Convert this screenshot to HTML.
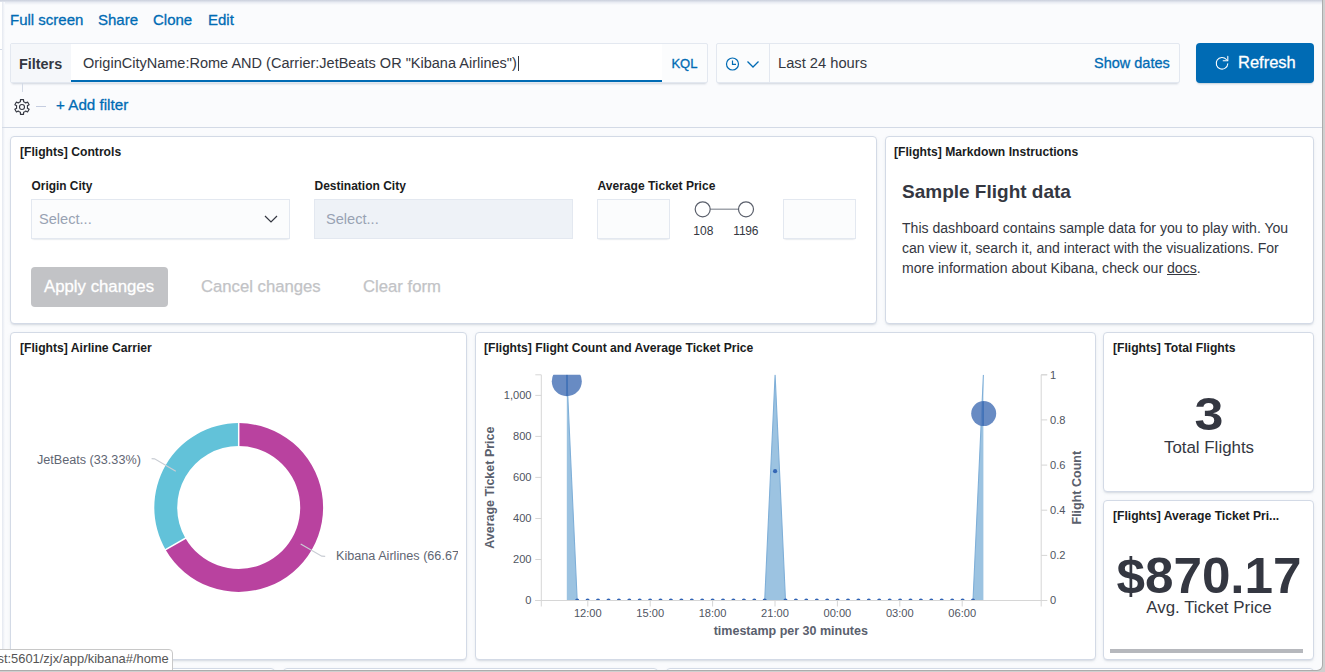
<!DOCTYPE html>
<html>
<head>
<meta charset="utf-8">
<title>Flights dashboard</title>
<style>
*{box-sizing:border-box;margin:0;padding:0}
html,body{width:1325px;height:672px;overflow:hidden;background:#cfcfcf;font-family:"Liberation Sans",sans-serif;color:#343741}
#win{position:absolute;left:0;top:0;width:1322px;height:670px;background:#fafbfd;border-radius:0 0 5px 0;overflow:hidden;box-shadow:0 0 0 1px #acacac}
.abs{position:absolute}
.t{position:absolute;white-space:nowrap;line-height:1}
.link{color:#006bb4;-webkit-text-stroke:0.3px #006bb4}
.frame{position:absolute;background:#fff;border:1px solid #d3dae6;border-radius:4px;box-shadow:0 2px 2px -1px rgba(152,162,179,.3),0 1px 5px -2px rgba(152,162,179,.3)}
.panel{position:absolute;border:1px solid transparent}
.ptitle{position:absolute;left:8px;top:7px;font-size:12.15px;font-weight:bold;color:#1a1c21;white-space:nowrap;line-height:14px}
.lbl{position:absolute;font-size:11.9px;font-weight:bold;color:#1a1c21;white-space:nowrap;line-height:14px}
.field{position:absolute;background:#fbfcfd;border:1px solid #e3e8f0;box-shadow:0 1px 1px -1px rgba(152,162,179,.3),0 2px 2px -2px rgba(152,162,179,.4)}
.md{font-size:14.07px;color:#343741}
</style>
</head>
<body>
<div id="win">
  <!-- top shadow -->
  <div class="abs" style="left:0;top:0;width:1322px;height:5px;background:linear-gradient(#c9cfdc,#e9ecf3 50%,#fafbfd)"></div>
  <!-- left nav sliver -->
  <div class="abs" style="left:0;top:2px;width:2px;height:668px;background:#fff"></div>
  <div class="abs" style="left:2px;top:2px;width:3px;height:668px;background:linear-gradient(90deg,#e4e8f0,#fafbfd)"></div>
  <div class="abs" style="left:0;top:49px;width:2px;height:1px;background:#d3dae6"></div>

  <!-- top nav links -->
  <div class="t link" style="left:10px;top:12px;font-size:15px">Full screen</div>
  <div class="t link" style="left:98px;top:12px;font-size:15px">Share</div>
  <div class="t link" style="left:153px;top:12px;font-size:15px">Clone</div>
  <div class="t link" style="left:208px;top:12px;font-size:15px">Edit</div>

  <!-- query bar -->
  <div class="abs" style="left:10px;top:43px;width:698px;height:40px;background:#fbfcfd;border:1px solid #e3e8f0;border-radius:2px;box-shadow:0 1px 1px -1px rgba(152,162,179,.3),0 3px 2px -2px rgba(152,162,179,.4)"></div>
  <div class="abs" style="left:11px;top:44px;width:60px;height:38px;background:#f5f7fa"></div>
  <div class="t" style="left:19px;top:56.5px;font-size:14.4px;font-weight:bold;color:#343741">Filters</div>
  <div class="abs" style="left:71px;top:44px;width:591px;height:38px;background:#fff"></div>
  <div class="abs" style="left:71px;top:80px;width:591px;height:2px;background:#006bb4"></div>
  <div class="t" id="q" style="left:83px;top:56.4px;font-size:14.53px;color:#343741">OriginCityName:Rome AND (Carrier:JetBeats OR "Kibana Airlines")</div>
  <div class="abs" id="caret" style="left:518px;top:56px;width:1px;height:15px;background:#343741"></div>
  <div class="t link" style="left:671.4px;top:56.8px;font-size:13px">KQL</div>

  <!-- date picker -->
  <div class="abs" style="left:716px;top:43px;width:464px;height:40px;background:#fbfcfd;border:1px solid #e3e8f0;border-radius:2px;box-shadow:0 1px 1px -1px rgba(152,162,179,.3),0 3px 2px -2px rgba(152,162,179,.4)"></div>
  <div class="abs" style="left:769px;top:44px;width:1px;height:38px;background:#e3e8f0"></div>
  <svg class="abs" style="left:724px;top:55.6px" width="38" height="16" viewBox="0 0 38 16">
    <circle cx="8.5" cy="8" r="6" fill="none" stroke="#006bb4" stroke-width="1.2"/>
    <path d="M8.5 4.5V8.3H12" fill="none" stroke="#006bb4" stroke-width="1.2"/>
    <path d="M23.5 5.5L29 11L34.5 5.5" fill="none" stroke="#006bb4" stroke-width="1.3"/>
  </svg>
  <div class="t" style="left:778px;top:56px;font-size:14.7px;color:#343741">Last 24 hours</div>
  <div class="t link" style="left:1094px;top:55.8px;font-size:14.5px">Show dates</div>

  <!-- refresh -->
  <div class="abs" style="left:1196px;top:43px;width:118px;height:40px;background:#006bb4;border-radius:4px;box-shadow:0 2px 2px -1px rgba(54,97,126,.3)"></div>
  <svg class="abs" style="left:1214px;top:54.5px" width="16" height="16" viewBox="0 0 16 16">
    <path d="M12.4 4.5A5.8 5.8 0 1 0 13.78 8.7" fill="none" stroke="#fff" stroke-width="1.1" stroke-linecap="round"/>
    <path d="M13.8 1.4V5.7H9.2" fill="none" stroke="#fff" stroke-width="1.1" stroke-linecap="round" stroke-linejoin="round"/>
  </svg>
  <div class="t" style="left:1238px;top:54px;font-size:16.5px;color:#fff;-webkit-text-stroke:0.3px #fff">Refresh</div>

  <!-- filter row -->
  <svg class="abs" style="left:13.2px;top:98px" width="18" height="18" viewBox="0 0 18 18">
    <path d="M11.75 4.24L10.61 3.74L10.56 1.66L7.44 1.66L7.39 3.74L6.25 4.24L5.25 4.98L3.43 3.98L1.87 6.68L3.64 7.76L3.50 9.00L3.64 10.24L1.87 11.32L3.43 14.02L5.25 13.02L6.25 13.76L7.39 14.26L7.44 16.34L10.56 16.34L10.61 14.26L11.75 13.76L12.75 13.02L14.57 14.02L16.13 11.32L14.36 10.24L14.50 9.00L14.36 7.76L16.13 6.68L14.57 3.98L12.75 4.98Z" fill="none" stroke="#343741" stroke-width="1.15" stroke-linejoin="round"/>
    <circle cx="9" cy="9" r="2.5" fill="none" stroke="#343741" stroke-width="1.1"/>
  </svg>
  <div class="abs" style="left:22px;top:83px;width:1px;height:9px;background:#d3dae6"></div>
  <div class="abs" style="left:36px;top:106px;width:10px;height:1px;background:#c5cde0"></div>
  <div class="t link" style="left:56px;top:97px;font-size:15.2px">+ Add filter</div>
  <div class="abs" style="left:2px;top:127px;width:1320px;height:1px;background:#d3dae6"></div>

  <!-- panel frames -->
  <div class="frame" style="left:10px;top:136px;width:867px;height:188px"></div>
  <div class="frame" style="left:885px;top:136px;width:429px;height:188px"></div>
  <div class="frame" style="left:10px;top:332px;width:457px;height:328px"></div>
  <div class="frame" style="left:475px;top:332px;width:621px;height:328px"></div>
  <div class="frame" style="left:1103px;top:332px;width:211px;height:160px"></div>
  <div class="frame" style="left:1103px;top:500px;width:211px;height:160px"></div>
  <div class="frame" style="left:10px;top:668px;width:265px;height:60px"></div>
  <div class="frame" style="left:283px;top:668px;width:375px;height:60px"></div>
  <div class="frame" style="left:666px;top:668px;width:648px;height:60px"></div>

  <!-- PANEL 1 controls -->
  <div class="panel" id="p1" style="left:11px;top:137px;width:866px;height:187px">
    <div class="ptitle">[Flights] Controls</div>
    <div class="lbl" style="left:19.5px;top:41px">Origin City</div>
    <div class="field" style="left:19px;top:61px;width:259px;height:40px"></div>
    <div class="t ph" style="left:27px;top:74px;font-size:14.6px;color:#98a2b3">Select...</div>
    <svg class="abs" style="left:251px;top:75px" width="16" height="12" viewBox="0 0 16 12"><path d="M2 3L8 9L14 3" fill="none" stroke="#343741" stroke-width="1.2"/></svg>
    <div class="lbl" style="left:302.5px;top:41px;font-size:12px">Destination City</div>
    <div class="abs" style="left:302px;top:61px;width:259px;height:40px;background:#eef2f7;border:1px solid #e3e8f0"></div>
    <div class="t ph" style="left:314px;top:74px;font-size:14.6px;color:#98a2b3">Select...</div>
    <div class="lbl" style="left:585.5px;top:41px;font-size:12.05px">Average Ticket Price</div>
    <div class="field" style="left:585px;top:61px;width:73px;height:40px"></div>
    <div class="field" style="left:771px;top:61px;width:73px;height:40px"></div>
    <svg class="abs" style="left:679.3px;top:61px" width="66" height="20" viewBox="0 0 66 20">
      <path d="M11.7 10.3H55" stroke="#a0a4ab" stroke-width="1.4"/>
      <circle cx="11.7" cy="10.3" r="7.5" fill="#fff" stroke="#5a5f6b" stroke-width="1.2"/>
      <circle cx="55" cy="10.3" r="7.5" fill="#fff" stroke="#5a5f6b" stroke-width="1.2"/>
    </svg>
    <div class="t" style="left:681.3px;top:87px;font-size:12px;color:#343741">108</div>
    <div class="t" style="left:721.3px;top:87px;letter-spacing:-0.2px;font-size:12px;color:#343741">1196</div>
    <div class="abs" style="left:19px;top:129px;width:137px;height:40px;background:#c2c3c6;border-radius:4px"></div>
    <div class="t" style="left:32px;top:140.6px;font-size:16.8px;color:#fff;-webkit-text-stroke:0.3px #fff">Apply changes</div>
    <div class="t" style="left:189px;top:140.7px;font-size:16.7px;-webkit-text-stroke:0.25px #c2c3c6;color:#c2c3c6">Cancel changes</div>
    <div class="t" style="left:351px;top:140.7px;font-size:16.7px;-webkit-text-stroke:0.25px #c2c3c6;color:#c2c3c6">Clear form</div>
  </div>
  <!-- PANEL 2 markdown -->
  <div class="panel" id="p2" style="left:885px;top:137px;width:429px;height:187px">
    <div class="ptitle">[Flights] Markdown Instructions</div>
    <div class="t" style="left:16px;top:44.2px;font-size:19px;font-weight:bold;color:#343741">Sample Flight data</div>
    <div class="t md" style="left:16px;top:83px">This dashboard contains sample data for you to play with. You</div>
    <div class="t md" style="left:16px;top:103px">can view it, search it, and interact with the visualizations. For</div>
    <div class="t md" style="left:16px;top:123px">more information about Kibana, check our <u>docs</u>.</div>
  </div>
  <!-- PANEL 3 pie -->
  <div class="panel" id="p3" style="left:11px;top:333px;width:456px;height:327px">
    <div class="ptitle">[Flights] Airline Carrier</div>
    <svg class="abs" style="left:0;top:0;overflow:hidden" width="446" height="325" viewBox="0 0 446 325">
      <path d="M226.70 89.10A84.4 84.4 0 1 1 153.61 215.70L173.44 204.25A61.5 61.5 0 1 0 226.70 112.00Z" fill="#b9429f"/>
      <path d="M153.61 215.70A84.4 84.4 0 0 1 226.70 89.10L226.70 112.00A61.5 61.5 0 0 0 173.44 204.25Z" fill="#62c2d9"/>
      <path d="M226.70 113.00L226.70 88.10M174.31 203.75L152.74 216.20" stroke="#fff" stroke-width="1.5"/>
      <path d="M139.6 124.7L142.6 124.8L163.8 137.2" fill="none" stroke="#c9cdd4" stroke-width="1.2"/>
      <path d="M288.7 209.9L309.8 222.2L313.2 222.4" fill="none" stroke="#c9cdd4" stroke-width="1.2"/>
      <text x="24.9" y="129.8" font-size="12.65" fill="#5f6673">JetBeats (33.33%)</text>
      <text x="324.0" y="226.0" font-size="12.65" fill="#5f6673">Kibana Airlines (66.67%)</text>
    </svg>
  </div>
  <!-- PANEL 4 chart -->
  <div class="panel" id="p4" style="left:475px;top:333px;width:621px;height:327px">
    <div class="ptitle">[Flights] Flight Count and Average Ticket Price</div>
    <svg class="abs" style="left:0;top:0" width="619" height="325" viewBox="0 0 619 325">
      <defs><clipPath id="cp"><rect x="65.3" y="40.8" width="501.9" height="225.7"/></clipPath></defs>
      <g clip-path="url(#cp)"><path d="M90.8 266.5L90.8 40.8L101.2 266.5ZM288.7 266.5L299.1 40.8L309.5 266.5ZM497.0 266.5L507.4 40.8L507.4 266.5Z" fill="#9cc3e1"/>
      <path d="M90.8 40.8L101.2 266.5M288.7 266.5L299.1 40.8L309.5 266.5M497.0 266.5L507.4 40.8" fill="none" stroke="#7fafd8" stroke-width="1.1" stroke-linejoin="round"/>
      <g fill="#2f62b3"><circle cx="101.2" cy="266.5" r="2.1"/><circle cx="111.6" cy="266.5" r="2.1"/><circle cx="122.0" cy="266.5" r="2.1"/><circle cx="132.5" cy="266.5" r="2.1"/><circle cx="142.9" cy="266.5" r="2.1"/><circle cx="153.3" cy="266.5" r="2.1"/><circle cx="163.7" cy="266.5" r="2.1"/><circle cx="174.1" cy="266.5" r="2.1"/><circle cx="184.5" cy="266.5" r="2.1"/><circle cx="194.9" cy="266.5" r="2.1"/><circle cx="205.4" cy="266.5" r="2.1"/><circle cx="215.8" cy="266.5" r="2.1"/><circle cx="226.2" cy="266.5" r="2.1"/><circle cx="236.6" cy="266.5" r="2.1"/><circle cx="247.0" cy="266.5" r="2.1"/><circle cx="257.4" cy="266.5" r="2.1"/><circle cx="267.9" cy="266.5" r="2.1"/><circle cx="278.3" cy="266.5" r="2.1"/><circle cx="288.7" cy="266.5" r="2.1"/><circle cx="309.5" cy="266.5" r="2.1"/><circle cx="319.9" cy="266.5" r="2.1"/><circle cx="330.3" cy="266.5" r="2.1"/><circle cx="340.8" cy="266.5" r="2.1"/><circle cx="351.2" cy="266.5" r="2.1"/><circle cx="361.6" cy="266.5" r="2.1"/><circle cx="372.0" cy="266.5" r="2.1"/><circle cx="382.4" cy="266.5" r="2.1"/><circle cx="392.8" cy="266.5" r="2.1"/><circle cx="403.2" cy="266.5" r="2.1"/><circle cx="413.7" cy="266.5" r="2.1"/><circle cx="424.1" cy="266.5" r="2.1"/><circle cx="434.5" cy="266.5" r="2.1"/><circle cx="444.9" cy="266.5" r="2.1"/><circle cx="455.3" cy="266.5" r="2.1"/><circle cx="465.7" cy="266.5" r="2.1"/><circle cx="476.2" cy="266.5" r="2.1"/><circle cx="486.6" cy="266.5" r="2.1"/><circle cx="497.0" cy="266.5" r="2.1"/></g>
      <circle cx="90.8" cy="47.2" r="15" fill="#4d77b8" fill-opacity=".85"/>
      <path d="M91.0 40.8V62.0" stroke="#3a6cb4" stroke-width="1.3"/>
      <circle cx="299.1" cy="137.2" r="2.1" fill="#3567b5"/>
      <circle cx="507.7" cy="79.6" r="12.5" fill="#4d77b8" fill-opacity=".85"/>
      <path d="M507.1 67.5V91.8" stroke="#3a6cb4" stroke-width="1.3"/></g>
      <path d="M59.3 40.8H65.3V272.5M59.3 266.5H571.2M571.2 40.8H565.2V272.5" fill="none" stroke="#d6d6d6" stroke-width="1"/>
      <path d="M59.3 266.5H65.3M59.3 225.5H65.3M59.3 184.5H65.3M59.3 143.4H65.3M59.3 102.4H65.3M59.3 61.4H65.3M565.2 266.5H571.2M565.2 221.4H571.2M565.2 176.2H571.2M565.2 131.1H571.2M565.2 85.9H571.2M565.2 40.8H571.2M111.8 266.5V272.5M174.2 266.5V272.5M236.6 266.5V272.5M299.0 266.5V272.5M361.4 266.5V272.5M423.8 266.5V272.5M486.2 266.5V272.5" stroke="#d6d6d6" stroke-width="1" fill="none"/>
      <g font-size="11.1" fill="#4f5562"><text x="55.5" y="270.2" text-anchor="end">0</text><text x="55.5" y="229.2" text-anchor="end">200</text><text x="55.5" y="188.2" text-anchor="end">400</text><text x="55.5" y="147.1" text-anchor="end">600</text><text x="55.5" y="106.1" text-anchor="end">800</text><text x="55.5" y="65.1" text-anchor="end">1,000</text><text x="574.0" y="270.2">0</text><text x="574.0" y="225.1">0.2</text><text x="574.0" y="179.9">0.4</text><text x="574.0" y="134.8">0.6</text><text x="574.0" y="89.6">0.8</text><text x="574.0" y="44.5">1</text><text x="111.8" y="283.2" text-anchor="middle">12:00</text><text x="174.2" y="283.2" text-anchor="middle">15:00</text><text x="236.6" y="283.2" text-anchor="middle">18:00</text><text x="299.0" y="283.2" text-anchor="middle">21:00</text><text x="361.4" y="283.2" text-anchor="middle">00:00</text><text x="423.8" y="283.2" text-anchor="middle">03:00</text><text x="486.2" y="283.2" text-anchor="middle">06:00</text></g>
      <text x="314.8" y="301.0" text-anchor="middle" font-size="12.5" font-weight="bold" fill="#5a606d">timestamp per 30 minutes</text>
      <text transform="translate(18.0 153.7) rotate(-90)" text-anchor="middle" font-size="12.5" font-weight="bold" fill="#5a606d">Average Ticket Price</text>
      <text transform="translate(605.3 153.7) rotate(-90)" text-anchor="middle" font-size="12.5" font-weight="bold" fill="#5a606d">Flight Count</text>
    </svg>
  </div>
  <!-- PANEL 5 -->
  <div class="panel" id="p5" style="left:1104px;top:333px;width:210px;height:159px">
    <div class="ptitle">[Flights] Total Flights</div>
    <div class="t" style="left:0;width:208px;text-align:center;top:57px;font-size:46px;font-weight:bold;color:#343741;transform:scaleX(1.13)">3</div>
    <div class="t" style="left:0;width:208px;text-align:center;top:106px;font-size:16.9px;color:#343741">Total Flights</div>
  </div>
  <!-- PANEL 6 -->
  <div class="panel" id="p6" style="left:1104px;top:501px;width:210px;height:159px">
    <div class="ptitle">[Flights] Average Ticket Pri...</div>
    <div class="t" style="left:0;width:208px;text-align:center;top:48.5px;font-size:49.5px;font-weight:bold;color:#343741;transform:scaleX(1.035)">$870.17</div>
    <div class="t" style="left:0;width:208px;text-align:center;top:98px;font-size:16.9px;color:#343741">Avg. Ticket Price</div>
    <div class="abs" style="left:5px;top:147px;width:193px;height:4px;background:#b6b8bd"></div>
  </div>

  <!-- status tooltip -->
  <div class="abs" id="status" style="left:-1px;top:649px;width:174px;height:22px;background:#fff;border:1px solid #c8c8c8;border-radius:0 4px 0 0"></div>
  <div class="t" style="left:-2.5px;top:652.5px;font-size:12.9px;color:#555">st:5601/zjx/app/kibana#/home</div>
</div>
</body>
</html>
